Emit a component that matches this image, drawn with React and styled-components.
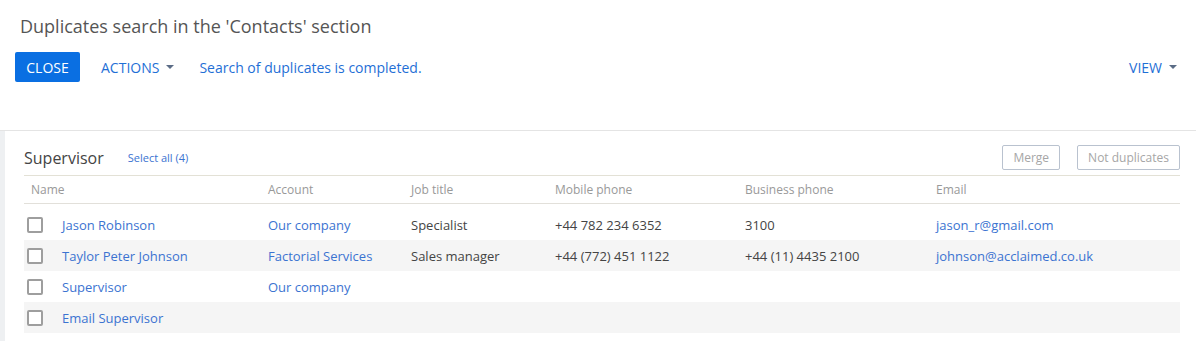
import React from 'react'
import styled, { createGlobalStyle } from 'styled-components'

const GlobalStyle = createGlobalStyle`
  body {
    margin: 0;
    background: #fff;
    font-family: 'Open Sans', 'Liberation Sans', sans-serif;
  }
`

const Page = styled.div`
  display: flex;
  flex-direction: column;
  width: 1196px;
  height: 341px;
  overflow: hidden;
  background: #fff;
`

const Header = styled.div`
  height: 131px;
  flex-shrink: 0;
  border-bottom: 1px solid #e4e4e4;
  box-sizing: border-box;
  padding: 13px 19px 0 15px;
`

const Title = styled.h1`
  margin: 0 0 0 5px;
  font-size: 18px;
  font-weight: 400;
  color: #555;
  line-height: 26px;
`

const Toolbar = styled.div`
  display: flex;
  align-items: center;
  margin-top: 13px;
  height: 30px;
`

const PrimaryButton = styled.button`
  width: 65px;
  height: 30px;
  padding: 0;
  border: none;
  border-radius: 2px;
  background: #0a6fe2;
  color: #fff;
  font-family: inherit;
  font-size: 14px;
  font-weight: 400;
  text-transform: uppercase;
`

const MenuButton = styled.button`
  display: flex;
  align-items: center;
  gap: 7px;
  border: none;
  background: transparent;
  padding: 0;
  margin-left: ${p => p.$offset || 0}px;
  color: #1f6fd6;
  font-family: inherit;
  font-size: 14px;
  text-transform: uppercase;
`

const Caret = styled.span`
  width: 0;
  height: 0;
  border-left: 4px solid transparent;
  border-right: 4px solid transparent;
  border-top: 4px solid #5b6c86;
`

const Status = styled.span`
  margin-left: 25px;
  color: #1f6fd6;
  font-size: 14px;
`

const Spacer = styled.div`
  flex: 1;
`

const Body = styled.div`
  display: flex;
  flex: 1;
`

const SideStrip = styled.div`
  width: 5px;
  background: #eef0f2;
`

const Panel = styled.div`
  flex: 1;
  padding: 14px 16px 0 19px;
`

const GroupHead = styled.div`
  display: flex;
  align-items: center;
  height: 25px;
  padding-bottom: 5px;
  border-bottom: 1px solid #e3e1d6;
  box-sizing: content-box;
`

const GroupTitle = styled.span`
  font-size: 16px;
  color: #444;
`

const SelectAll = styled.a`
  margin-left: 24px;
  font-size: 11px;
  color: #3b73d1;
  cursor: pointer;
`

const GhostButton = styled.button`
  height: 25px;
  padding: 0 10px;
  margin-left: ${p => p.$gap || 0}px;
  border: 1px solid #b9c2cf;
  border-radius: 2px;
  background: #fff;
  color: #a6a6a6;
  font-family: inherit;
  font-size: 12px;
`

const Grid = styled.div`
  display: grid;
  grid-template-columns: 237px 143px 144px 190px 191px 1fr;
  align-items: center;
  padding-left: 7px;
  height: ${p => p.$h}px;
  background: ${p => (p.$shade ? '#f5f5f5' : 'transparent')};
  border-bottom: ${p => (p.$line ? '1px solid #e2e0da' : 'none')};
`

const HeadCell = styled.span`
  font-size: 12px;
  color: #999;
`

const Rows = styled.div`
  margin-top: 5px;
`

const Cell = styled.span`
  font-size: 13px;
  color: ${p => (p.$link ? '#3b73d1' : '#444')};
  white-space: nowrap;
`

const NameCell = styled.span`
  display: flex;
  align-items: center;
  margin-left: -4px;
`

const Check = styled.span`
  width: 12px;
  height: 12px;
  border: 2px solid #9e9e9e;
  border-radius: 2px;
  margin-right: 19px;
  background: #fff;
`

const columns = ['Name', 'Account', 'Job title', 'Mobile phone', 'Business phone', 'Email']

const rows = [
  ['Jason Robinson', 'Our company', 'Specialist', '+44 782 234 6352', '3100', 'jason_r@gmail.com'],
  ['Taylor Peter Johnson', 'Factorial Services', 'Sales manager', '+44 (772) 451 1122', '+44 (11) 4435 2100', 'johnson@acclaimed.co.uk'],
  ['Supervisor', 'Our company', '', '', '', ''],
  ['Email Supervisor', '', '', '', '', '']
]

const App = () => {
  return (
    <Page>
      <GlobalStyle />
      <Header>
        <Title>Duplicates search in the 'Contacts' section</Title>
        <Toolbar>
          <PrimaryButton>Close</PrimaryButton>
          <MenuButton $offset={21}>
            Actions <Caret />
          </MenuButton>
          <Status>Search of duplicates is completed.</Status>
          <Spacer />
          <MenuButton>
            View <Caret />
          </MenuButton>
        </Toolbar>
      </Header>
      <Body>
        <SideStrip />
        <Panel>
          <GroupHead>
            <GroupTitle>Supervisor</GroupTitle>
            <SelectAll>Select all (4)</SelectAll>
            <Spacer />
            <GhostButton>Merge</GhostButton>
            <GhostButton $gap={17}>Not duplicates</GhostButton>
          </GroupHead>
          <Grid $h={27} $line>
            {columns.map(c => (
              <HeadCell key={c}>{c}</HeadCell>
            ))}
          </Grid>
          <Rows>
            {rows.map((r, i) => (
              <Grid key={i} $h={31} $shade={i % 2 === 1}>
                <NameCell>
                  <Check />
                  <Cell $link>{r[0]}</Cell>
                </NameCell>
                <Cell $link>{r[1]}</Cell>
                <Cell>{r[2]}</Cell>
                <Cell>{r[3]}</Cell>
                <Cell>{r[4]}</Cell>
                <Cell $link>{r[5]}</Cell>
              </Grid>
            ))}
          </Rows>
        </Panel>
      </Body>
    </Page>
  )
}

export default App
